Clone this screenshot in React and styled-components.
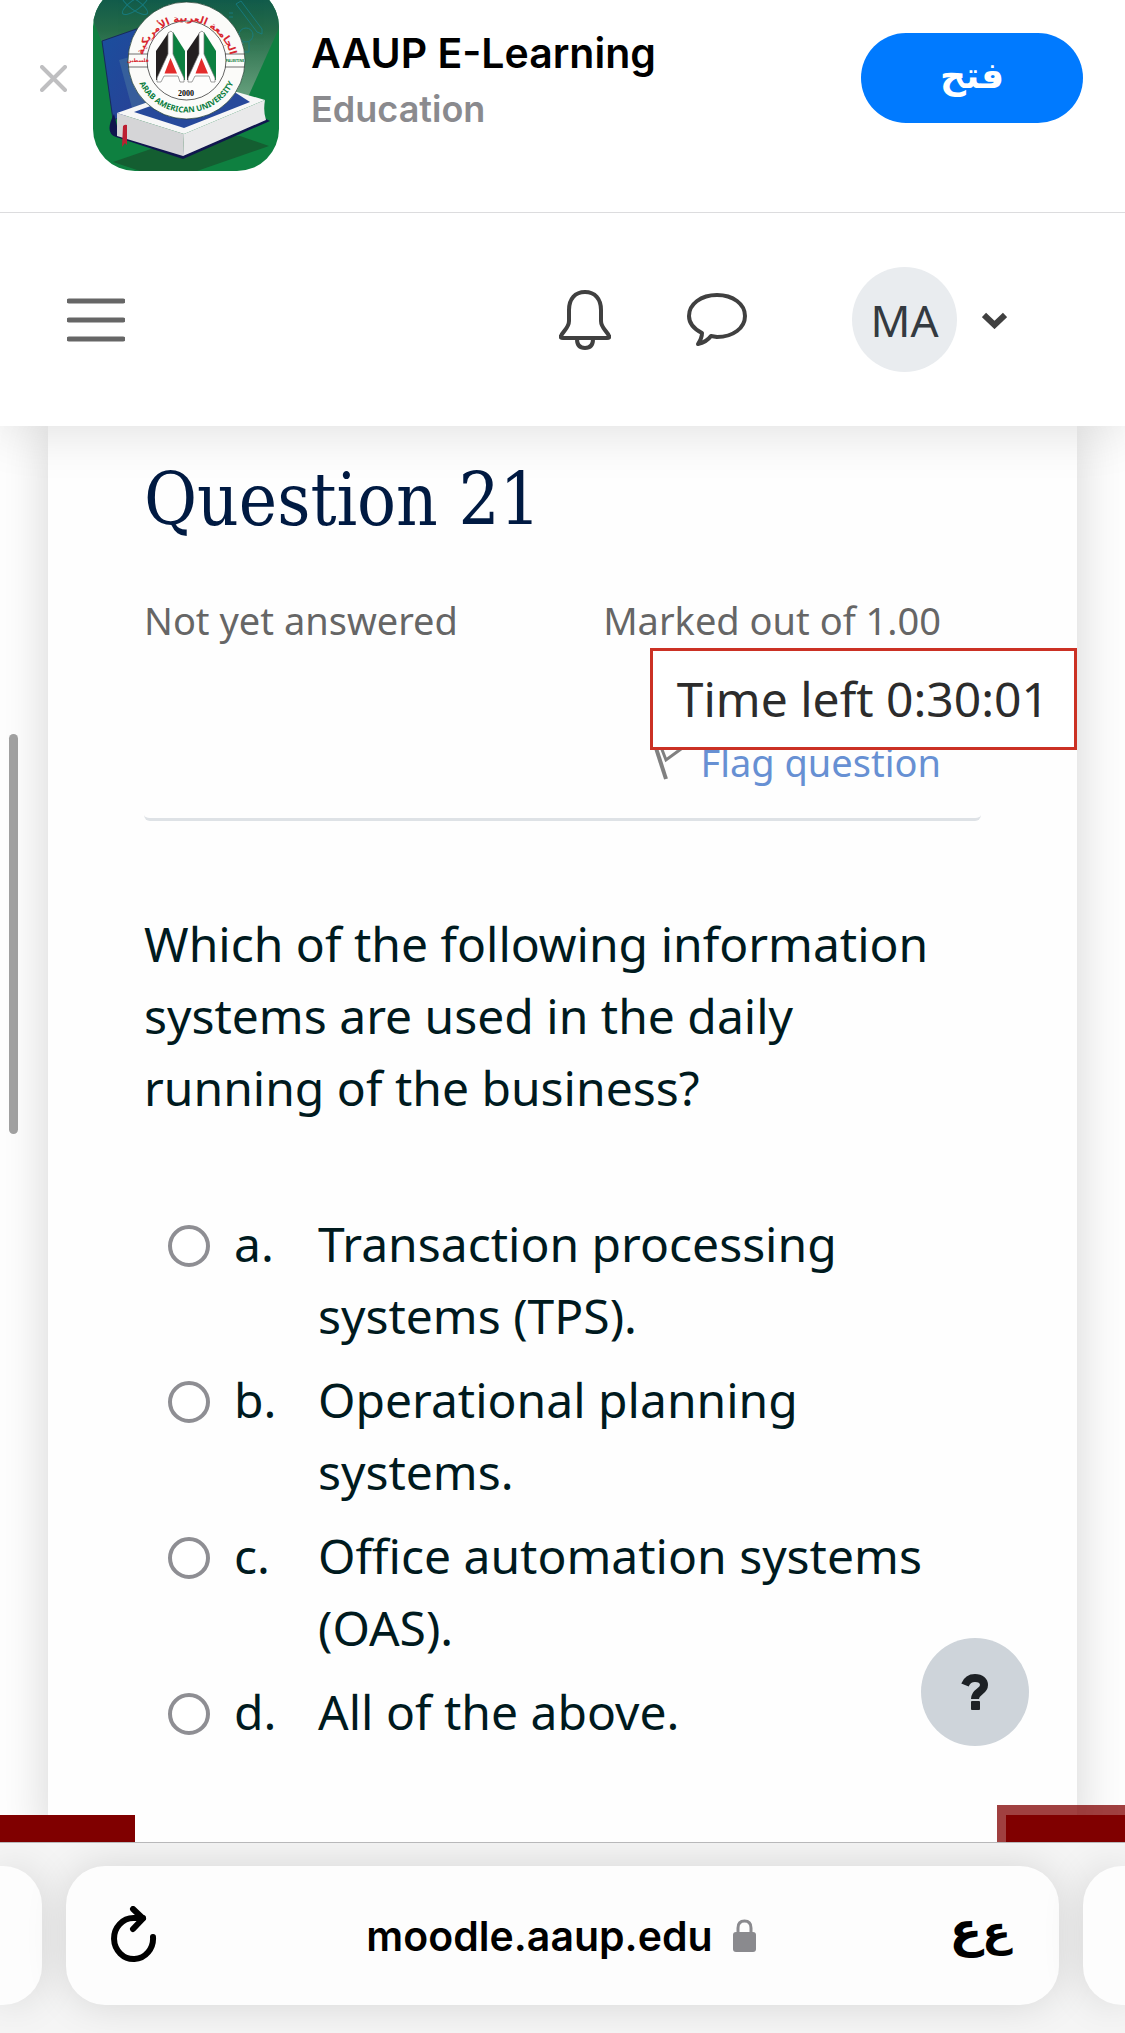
import styled, { createGlobalStyle } from "styled-components";

const answers = [
  { letter: "a.", text: "Transaction processing systems (TPS)." },
  { letter: "b.", text: "Operational planning systems." },
  { letter: "c.", text: "Office automation systems (OAS)." },
  { letter: "d.", text: "All of the above." },
];

export default function App() {
  return (
    <Page>
      <GlobalStyle />
      <AppBanner />
      <NavBar />
      <Main>
        <ScrollThumb />
        <Card>
          <QuestionInfo />
          <QuestionForm />
          <Timer role="timer">Time left 0:30:01</Timer>
        </Card>
        <HelpButton type="button" aria-label="Help">
          <svg width="28" height="36" viewBox="0 0 28 36">
            <path
              d="M4 11C6 6 10 4 14 4C20 4 23 7 23 11C23 18 14 17 14 25"
              fill="none"
              stroke="#1d2125"
              strokeWidth="8"
            />
            <rect x="10" y="27" width="9" height="9" rx="1" fill="#1d2125" />
          </svg>
        </HelpButton>
        <FooterBlocks>
          <LeftBlock />
          <RightBlock />
        </FooterBlocks>
      </Main>
      <BrowserBar />
    </Page>
  );
}

function AppBanner() {
  return (
    <BannerWrapper>
      <IconButton type="button" aria-label="Close">
        <svg width="27" height="27" viewBox="0 0 27 27">
          <path d="M2 2L25 25M25 2L2 25" stroke="#bfbfc1" strokeWidth="4" strokeLinecap="round" />
        </svg>
      </IconButton>
      <AppLogo />
      <BannerText>
        <AppName>AAUP E-Learning</AppName>
        <AppCategory>Education</AppCategory>
      </BannerText>
      <OpenButton type="button" lang="ar" dir="rtl">فتح</OpenButton>
    </BannerWrapper>
  );
}

function AppLogo() {
  return (
    <svg width="186" height="186" viewBox="93 -15 186 186" role="img" aria-label="AAUP">
      <defs>
        <linearGradient id="ray" x1="0" y1="0" x2="0" y2="1">
          <stop offset="0" stopColor="#08544b" />
          <stop offset="0.4" stopColor="#256b48" />
          <stop offset="1" stopColor="#6aa380" />
        </linearGradient>
        <linearGradient id="cover" x1="0" y1="0" x2="1" y2="1">
          <stop offset="0" stopColor="#1a4f9e" />
          <stop offset="1" stopColor="#2b3f94" />
        </linearGradient>
        <clipPath id="tile">
          <rect x="93" y="-15" width="186" height="186" rx="42" />
        </clipPath>
        <path id="arcTop" d="M141.5 66A45 45 0 1 1 231.5 66" />
        <path id="arcBottom" d="M134.5 52A52.6 52.6 0 1 0 238.5 52" />
      </defs>
      <g clipPath="url(#tile)">
        <rect x="93" y="-15" width="186" height="186" fill="#0e8040" />
        <path d="M93 20V-15H279V28L248 97L125 100Z" fill="url(#ray)" />
        <g fill="none" stroke="#17808a" strokeWidth="1" opacity="0.8">
          <ellipse cx="135" cy="5" rx="15" ry="5" transform="rotate(35 135 5)" />
          <ellipse cx="135" cy="5" rx="15" ry="5" transform="rotate(-35 135 5)" />
          <path d="M236 4L241 1L262 29V34L257 32ZM229 13H233M229 17H233" />
          <circle cx="246" cy="35" r="7" />
          <path d="M243 42L242 52H249V42" />
        </g>
        <path d="M113 162L180 139L240 136L269 146L197 171H140Z" fill="#145e31" />
        <path d="M102 41L145 26L155 105L113 120Z" fill="url(#cover)" stroke="#172a5c" />
        <path d="M119 60L155 50V103L132 108Z" fill="#4a78a0" opacity="0.5" />
        <path d="M114 114Q104 133 116 137L183 159L270 121L262 117L183 150L118 130Z" fill="#10164e" />
        <path d="M117 113L165 96L237 92L265 100L184 134Z" fill="#f7f7f7" />
        <path d="M134 112L170 99L236 93L250 102L184 128Z" fill="#27499b" />
        <path d="M117 113L184 134L183 156L117 136Z" fill="#d5d5d7" />
        <path d="M184 134L265 100Q263 111 266 120L183 156Z" fill="#e9e9ea" />
        <path d="M123 126Q125 124 127 125V145L125 143L122 147Z" fill="#bd1f32" />
        <circle cx="186.5" cy="60.5" r="58.5" fill="#fbfbf9" stroke="#1d3b2c" strokeWidth="0.7" />
        <circle cx="186.5" cy="60.5" r="39.5" fill="#fdfdfc" stroke="#222" strokeWidth="0.7" />
        <path d="M128 54H148M128 67H148M225 54H245M225 67H245" stroke="#333" strokeWidth="0.7" />
        <LogoText fill="#d8262f" fontSize="10" textAnchor="middle">
          <textPath href="#arcTop" startOffset="50%">الجامعة العربية الأمريكية</textPath>
        </LogoText>
        <LatinLogoText fill="#0b7d3e" fontSize="8" textAnchor="middle">
          <textPath href="#arcBottom" startOffset="50%">ARAB AMERICAN UNIVERSITY</textPath>
        </LatinLogoText>
        <LogoText x="138" y="62" fill="#d8262f" fontSize="5" textAnchor="middle">فلسطين</LogoText>
        <LatinLogoText x="235" y="62" fill="#0b7d3e" fontSize="3.5" textAnchor="middle">PALESTINE</LatinLogoText>
        <YearText x="186" y="96" textAnchor="middle">2000</YearText>
        <LetterMark />
        <LetterMark transform="translate(31 0)" />
      </g>
    </svg>
  );
}

function LetterMark(props) {
  return (
    <g {...props}>
      <path d="M156 51L169 32V55L158 80L156 80Z" fill="#231f20" />
      <path d="M185 51L173 32V55L183 80H185Z" fill="#0c8040" />
      <path
        d="M168 54V33L171 31L173 33V54L184 78V82H180L178 76H164L161 82H157V78Z"
        fill="#fff"
        stroke="#777"
        strokeWidth="0.7"
      />
      <path d="M170.5 58L164.5 73.5H177Z" fill="#e32c2c" />
    </g>
  );
}

function NavBar() {
  return (
    <NavWrapper>
      <IconButton type="button" aria-label="Side panel">
        <svg width="58" height="44" viewBox="0 0 58 44">
          <path d="M2 3H56M2 22H56M2 41H56" stroke="#666" strokeWidth="5" strokeLinecap="round" />
        </svg>
      </IconButton>
      <NavIcons>
        <IconButton type="button" aria-label="Notifications">
          <svg width="52" height="60" viewBox="0 0 52 60" fill="none" stroke="#404040" strokeWidth="4">
            <path d="M26 2C16 2 10 9 10 20V31C10 38 4 41 2 46Q1 48 4 48H48Q51 48 50 46C48 41 42 38 42 31V20C42 9 36 2 26 2Z" />
            <path d="M18 49C18 55 21 58 26 58S34 55 34 49" />
          </svg>
        </IconButton>
        <IconButton type="button" aria-label="Messages">
          <svg width="60" height="54" viewBox="0 0 60 54" fill="none" stroke="#404040" strokeWidth="4" strokeLinejoin="round">
            <path d="M15 40C7 36 2 30 2 23C2 11 14 2 30 2S58 11 58 23S46 44 30 44L24 43C21 47 16 50 11 51C13 48 15 44 15 40Z" />
          </svg>
        </IconButton>
      </NavIcons>
      <UserMenu type="button">
        <Avatar>MA</Avatar>
        <svg width="25" height="18" viewBox="0 0 25 18">
          <path d="M2 4L12.5 14L23 4" fill="none" stroke="#404040" strokeWidth="6" />
        </svg>
      </UserMenu>
    </NavWrapper>
  );
}

function QuestionInfo() {
  return (
    <InfoWrapper>
      <Title>Question 21</Title>
      <InfoRow>
        <span>Not yet answered</span>
        <span>Marked out of 1.00</span>
      </InfoRow>
      <FlagRow>
        <FlagLink href="#flag">
          <svg width="32" height="36" viewBox="0 0 32 36" fill="none" stroke="#808080">
            <path d="M3 1L14 35" strokeWidth="4" />
            <path d="M9 3L29 5L14 16Z" strokeWidth="3" />
          </svg>
          Flag question
        </FlagLink>
      </FlagRow>
    </InfoWrapper>
  );
}

function QuestionForm() {
  return (
    <form>
      <QuestionText>
        Which of the following information systems are used in the daily running of the business?
      </QuestionText>
      <AnswerList>
        {answers.map((answer) => (
          <AnswerLabel key={answer.letter}>
            <Radio type="radio" name="answer" />
            <span>{answer.letter}</span>
            <span>{answer.text}</span>
          </AnswerLabel>
        ))}
      </AnswerList>
    </form>
  );
}

function BrowserBar() {
  return (
    <BarWrapper>
      <SideTab $left />
      <AddressBar>
        <IconButton type="button" aria-label="Reload">
          <svg width="46" height="60" viewBox="0 0 46 60" fill="none" stroke="#000" strokeWidth="6" strokeLinecap="round" strokeLinejoin="round">
            <path d="M42 31A19.5 20.5 0 1 1 22.5 12H32" />
            <path d="M22 3L32 12.5L22 23" />
          </svg>
        </IconButton>
        <Address>
          moodle.aaup.edu
          <svg width="23" height="33" viewBox="0 0 23 33">
            <rect y="13" width="23" height="20" rx="3" fill="#8a8a8e" />
            <path d="M5 14V9C5 4 8 2 11.5 2S18 4 18 9V14" fill="none" stroke="#8a8a8e" strokeWidth="3" />
          </svg>
        </Address>
        <TextSizeButton type="button" lang="ar" dir="rtl" aria-label="Text size">
          <SmallLetter>ع</SmallLetter>
          <span>ع</span>
        </TextSizeButton>
      </AddressBar>
      <SideTab />
    </BarWrapper>
  );
}

const GlobalStyle = createGlobalStyle`
  * {
    box-sizing: border-box;
  }
  body {
    margin: 0;
    background: #fefefe;
    font-family: "Noto Sans", sans-serif;
  }
  button {
    border: 0;
    padding: 0;
    font: inherit;
    color: inherit;
    cursor: pointer;
  }
  svg {
    display: block;
    flex-shrink: 0;
  }
`;

const Page = styled.div`
  display: flex;
  flex-direction: column;
  min-height: 100vh;
  overflow: hidden;
`;

const IconButton = styled.button`
  background: none;
`;

/* the banner is partly scrolled under the top edge */
const BannerWrapper = styled.header`
  position: relative;
  z-index: 2;
  display: flex;
  align-items: center;
  margin-top: -15px;
  padding: 0 42px 41px 40px;
  border-bottom: 1px solid #dcdcde;
  background: #fff;
  font-family: Inter, sans-serif;
  font-weight: 600;
  > svg {
    margin: 0 32px 0 26px;
  }
`;
const BannerText = styled.div`
  flex: 1;
  padding-top: 6px;
`;
const AppName = styled.div`
  font-size: 41px;
  line-height: 56px;
  color: #000;
`;
const AppCategory = styled.div`
  font-size: 36px;
  line-height: 56px;
  color: #8a8a8e;
`;
const OpenButton = styled.button`
  width: 222px;
  height: 90px;
  padding-bottom: 6px;
  border-radius: 45px;
  background: #007aff;
  color: #fff;
  font-family: "DejaVu Sans", sans-serif;
  font-size: 36px;
  font-weight: 700;
`;

const LogoText = styled.text`
  font-family: "DejaVu Sans", sans-serif;
  font-weight: 700;
`;
const LatinLogoText = styled(LogoText)`
  font-family: "Noto Sans", sans-serif;
`;
const YearText = styled.text`
  font-family: "Liberation Serif", serif;
  font-size: 8px;
  font-weight: 700;
`;

const NavWrapper = styled.nav`
  position: relative;
  z-index: 1;
  display: flex;
  align-items: center;
  padding: 54px 118px 54px 67px;
  background: #fff;
  box-shadow: 0 6px 48px rgba(0, 0, 0, 0.12);
`;
const NavIcons = styled.div`
  display: flex;
  align-items: center;
  gap: 76px;
  margin-left: auto;
`;
const UserMenu = styled.button`
  display: flex;
  align-items: center;
  gap: 25px;
  margin-left: 105px;
  background: none;
`;
const Avatar = styled.span`
  display: flex;
  align-items: center;
  justify-content: center;
  width: 105px;
  height: 105px;
  border-radius: 50%;
  background: #e9ecef;
  color: #343a40;
  font-size: 44px;
`;

const Main = styled.main`
  position: relative;
  display: flex;
  flex: 1;
  flex-direction: column;
  padding: 0 48px;
`;
const ScrollThumb = styled.div`
  position: absolute;
  top: 308px;
  left: 9px;
  width: 9px;
  height: 400px;
  border-radius: 5px;
  background: #a2a2a2;
`;
const Card = styled.div`
  position: relative;
  flex: 1;
  padding: 32px 96px 60px;
  background: #fefefe;
  box-shadow: 0 0 48px rgba(0, 0, 0, 0.17);
`;

const InfoWrapper = styled.section`
  border-bottom: 3px solid #dee2e6;
  border-radius: 6px;
  padding-bottom: 26px;
  color: #666;
  font-size: 38px;
  line-height: 60px;
`;
const Title = styled.h3`
  margin: 0 0 48px;
  color: #001a42;
  font-family: "DejaVu Serif Condensed", "DejaVu Serif", serif;
  font-size: 72px;
  font-weight: 400;
  line-height: 84px;
`;
const InfoRow = styled.div`
  display: flex;
  justify-content: space-between;
  padding-right: 40px;
`;
const FlagRow = styled.div`
  display: flex;
  justify-content: flex-end;
  padding: 82px 40px 0 0;
`;
const FlagLink = styled.a`
  display: flex;
  align-items: center;
  gap: 16px;
  color: #6790d3;
  text-decoration: none;
`;

const Timer = styled.div`
  position: absolute;
  top: 222px;
  right: 0;
  padding: 12px 25px 12px 24px;
  border: 3px solid #cb3124;
  background: #fff;
  color: #2c2c2c;
  font-size: 48px;
  line-height: 72px;
`;

const QuestionText = styled.p`
  margin: 87px 0 84px;
  color: #001a1e;
  font-size: 48px;
  line-height: 72px;
`;
const AnswerList = styled.div`
  display: flex;
  flex-direction: column;
  gap: 12px;
  padding-left: 24px;
`;
const AnswerLabel = styled.label`
  display: grid;
  grid-template-columns: 66px 84px 1fr;
  color: #001a1e;
  font-size: 48px;
  line-height: 72px;
`;
const Radio = styled.input`
  appearance: none;
  width: 42px;
  height: 42px;
  margin: 17px 0 0;
  border: 4px solid #8e8e93;
  border-radius: 50%;
  background: #fff;
  &:checked {
    border-width: 12px;
  }
`;

const HelpButton = styled.button`
  position: absolute;
  right: 96px;
  bottom: 96px;
  display: flex;
  align-items: center;
  justify-content: center;
  width: 108px;
  height: 108px;
  border-radius: 50%;
  background: #ced4da;
`;

const FooterBlocks = styled.div`
  position: absolute;
  right: 0;
  bottom: 0;
  left: 0;
  display: flex;
  align-items: flex-end;
  justify-content: space-between;
`;
const LeftBlock = styled.div`
  width: 135px;
  height: 27px;
  background: #800000;
`;
const RightBlock = styled.div`
  width: 128px;
  height: 37px;
  border: solid rgba(128, 0, 0, 0.75);
  border-width: 10px 0 0 9px;
  background: #800000;
  background-clip: padding-box;
`;

const BarWrapper = styled.footer`
  position: relative;
  display: flex;
  gap: 24px;
  padding: 23px 0 28px;
  overflow: hidden;
  border-top: 1px solid #b8b8ba;
  background: #f5f5f5;
`;
const AddressBar = styled.div`
  display: grid;
  flex: 1;
  grid-template-columns: 1fr auto 1fr;
  align-items: center;
  height: 139px;
  padding: 0 48px 0 45px;
  border-radius: 39px;
  background: #fdfdfd;
  box-shadow: 0 0 40px rgba(0, 0, 0, 0.13);
`;
const SideTab = styled.div`
  width: 42px;
  border-radius: ${(props) => (props.$left ? "0 39px 39px 0" : "39px 0 0 39px")};
  background: #fdfdfd;
  box-shadow: 0 0 40px rgba(0, 0, 0, 0.13);
`;
const Address = styled.div`
  display: flex;
  align-items: center;
  gap: 20px;
  color: #000;
  font-family: Inter, sans-serif;
  font-size: 41px;
  font-weight: 600;
`;
const TextSizeButton = styled.button`
  display: flex;
  align-items: baseline;
  justify-self: end;
  padding-bottom: 10px;
  background: none;
  color: #000;
  font-family: "DejaVu Sans", sans-serif;
  font-size: 48px;
  font-weight: 700;
  line-height: 72px;
`;
const SmallLetter = styled.span`
  font-size: 42px;
`;
